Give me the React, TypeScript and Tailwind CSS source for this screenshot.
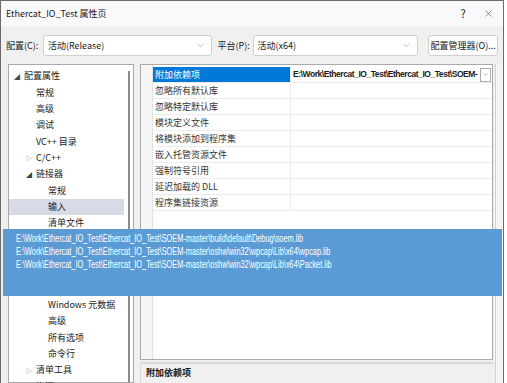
import { ChevronDown, X } from "lucide-react";

const font = { fontFamily: '"Noto Sans CJK SC", "Liberation Sans", sans-serif' };

const tree: { label: string; level: number; arrow?: "open" | "closed"; selected?: boolean }[] = [
  { label: "配置属性", level: 0, arrow: "open" },
  { label: "常规", level: 1 },
  { label: "高级", level: 1 },
  { label: "调试", level: 1 },
  { label: "VC++ 目录", level: 1 },
  { label: "C/C++", level: 1, arrow: "closed" },
  { label: "链接器", level: 1, arrow: "open" },
  { label: "常规", level: 2 },
  { label: "输入", level: 2, selected: true },
  { label: "清单文件", level: 2 },
  { label: "调试", level: 2 },
  { label: "系统", level: 2 },
  { label: "优化", level: 2 },
  { label: "嵌入的 IDL", level: 2 },
  { label: "Windows 元数据", level: 2 },
  { label: "高级", level: 2 },
  { label: "所有选项", level: 2 },
  { label: "命令行", level: 2 },
  { label: "清单工具", level: 1, arrow: "closed" },
  { label: "资源", level: 1, arrow: "closed" },
];

const props = [
  "附加依赖项",
  "忽略所有默认库",
  "忽略特定默认库",
  "模块定义文件",
  "将模块添加到程序集",
  "嵌入托管资源文件",
  "强制符号引用",
  "延迟加载的 DLL",
  "程序集链接资源",
];

const libs = [
  "E:\\Work\\Ethercat_IO_Test\\Ethercat_IO_Test\\SOEM-master\\build\\default\\Debug\\soem.lib",
  "E:\\Work\\Ethercat_IO_Test\\Ethercat_IO_Test\\SOEM-master\\oshw\\win32\\wpcap\\Lib\\x64\\wpcap.lib",
  "E:\\Work\\Ethercat_IO_Test\\Ethercat_IO_Test\\SOEM-master\\oshw\\win32\\wpcap\\Lib\\x64\\Packet.lib",
];

function Select({ value, className }: { value: string; className: string }) {
  return (
    <div className={`h-[21px] flex items-center justify-between bg-white border border-[#d0d0d0] rounded-[3px] pl-[4px] pr-[6px] ${className}`}>
      <span>{value}</span>
      <ChevronDown className="w-[9px] h-[9px] text-[#888]" strokeWidth={1.5} />
    </div>
  );
}

export default function App() {
  return (
    <div style={font} className="relative w-[507px] h-[383px] overflow-hidden bg-white text-[9px] text-[#1a1a1a]">
      <div className="w-[504px] h-[383px] border-l border-t border-r border-[#6b6b6b] bg-[#f0f0f0] flex flex-col">
        {/* Title bar */}
        <div className="h-[25px] shrink-0 bg-[#f9f9fb] flex items-center pl-[5px]">
          <span className="flex-1">Ethercat_IO_Test 属性页</span>
          <span className="w-[20px] text-center text-[11px]">?</span>
          <span className="w-[30px] flex justify-center">
            <X className="w-[11px] h-[11px] text-[#333]" strokeWidth={1.2} />
          </span>
        </div>

        {/* Config row */}
        <div className="h-[37px] shrink-0 flex items-center pl-[5px] pr-[5px] pt-[2px]">
          <span className="w-[37px]">配置(C):</span>
          <Select value="活动(Release)" className="w-[169px]" />
          <span className="w-[35px] ml-[6px]">平台(P):</span>
          <Select value="活动(x64)" className="w-[166px]" />
          <div className="ml-[10px] h-[21px] w-[70px] flex items-center justify-center bg-[#fdfdfd] border border-[#d0d0d0] rounded-[3px]">
            配置管理器(O)...
          </div>
        </div>

        {/* Body */}
        <div className="flex-1 flex pl-[7px] pt-[1px] min-h-0">
          {/* Tree */}
          <div className="w-[126px] shrink-0 bg-white border border-[#a9a9a9] flex">
            <div className="flex-1 pt-[3px]">
              {tree.map((t, i) => (
                <div
                  key={i}
                  className={`h-[16.33px] flex items-center ${t.selected ? "bg-[#d6dbe6]" : ""}`}
                  style={{ paddingLeft: 5 + t.level * 12 }}
                >
                  <span className="w-[10px] text-[6px] text-[#444]">
                    {t.arrow === "open" ? "◢" : t.arrow === "closed" ? "▷" : ""}
                  </span>
                  <span>{t.label}</span>
                </div>
              ))}
            </div>
            <div className="w-[9px] shrink-0 flex justify-center pt-[6px]">
              <div className="w-[2px] h-full bg-[#8c8c8c]" />
            </div>
          </div>

          {/* Property area */}
          <div className="ml-[6px] w-[353px] shrink-0 flex flex-col">
            <div className="h-[296px] bg-white border border-[#a9a9a9] flex">
              <div className="w-[12px] shrink-0 bg-[#f5f5f5] border-r border-dotted border-[#cfcfcf]" />
              <div className="flex-1 min-w-0 pt-[2px]">
                {props.map((p, i) => (
                  <div key={i} className="h-[16px] flex border-b border-[#ececec]">
                    <div className={`w-[137px] shrink-0 flex items-center pl-[2px] ${i === 0 ? "bg-[#0078d7] text-white" : "text-[#333]"}`}>{p}</div>
                    <div className="flex-1 min-w-0 flex items-center pl-[2px] border-l border-[#ececec] font-bold text-[8.5px] tracking-[-0.45px]" style={{ fontFamily: '"Liberation Sans", sans-serif' }}>
                      {i === 0 && (
                        <>
                          <span className="flex-1 min-w-0 overflow-hidden whitespace-nowrap">E:\Work\Ethercat_IO_Test\Ethercat_IO_Test\SOEM-</span>
                          <span className="w-[11px] h-[14px] shrink-0 border border-[#aaa] bg-white flex items-center justify-center mr-[1px]">
                            <ChevronDown className="w-[7px] h-[7px] text-[#666]" strokeWidth={1.5} />
                          </span>
                        </>
                      )}
                    </div>
                  </div>
                ))}
              </div>
            </div>
            <div className="mt-[2px] flex-1 border-t-2 border-[#a0a0a0] border-l border-[#d8d8d8] bg-[#f0f0f0] pl-[5px] pt-[2px] font-bold">
              附加依赖项
            </div>
          </div>

          <div className="ml-[2px] w-[8px] bg-[#f3f3f3] border-l border-[#c9d3e6]" />
        </div>
      </div>

      {/* Dropdown overlay listing libs */}
      <div className="absolute left-[3px] top-[229px] w-[499px] h-[67px] bg-[#5b9bd5] pl-[13px] pt-[3px]">
        <div
          className="text-white text-[10.5px] leading-[13px] scale-x-[0.70] origin-left whitespace-nowrap"
          style={{ fontFamily: '"Liberation Sans", sans-serif' }}
        >
          {libs.map((l) => (
            <div key={l}>{l}</div>
          ))}
        </div>
      </div>
    </div>
  );
}
